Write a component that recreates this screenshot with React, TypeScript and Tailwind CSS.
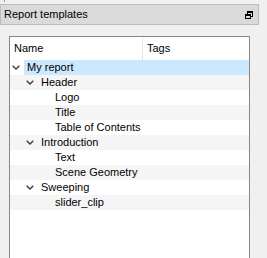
import React from "react";

type Node = {
  label: string;
  depth: 0 | 1 | 2;
  open?: boolean;
  selected?: boolean;
};

const rows: Node[] = [
  { label: "My report", depth: 0, open: true, selected: true },
  { label: "Header", depth: 1, open: true },
  { label: "Logo", depth: 2 },
  { label: "Title", depth: 2 },
  { label: "Table of Contents", depth: 2 },
  { label: "Introduction", depth: 1, open: true },
  { label: "Text", depth: 2 },
  { label: "Scene Geometry", depth: 2 },
  { label: "Sweeping", depth: 1, open: true },
  { label: "slider_clip", depth: 2 },
];

const indentClass = ["w-[14px]", "w-[28px]", "w-[42px]"];

const Chevron = () => (
  <svg width="8" height="5" viewBox="0 0 8 5" className="block">
    <path d="M0.7 0.7 L4 4 L7.3 0.7" fill="none" stroke="#3c3c3c" strokeWidth="1.4" />
  </svg>
);

const FloatIcon = () => (
  <svg width="8" height="8" viewBox="0 0 8 8" className="block">
    <rect x="2.5" y="0.5" width="5" height="5" fill="none" stroke="#000" />
    <rect x="2" y="0" width="6" height="2" fill="#000" />
    <rect x="0.5" y="3.5" width="5" height="4" fill="#dadada" stroke="#000" />
    <rect x="0" y="3" width="6" height="2" fill="#000" />
  </svg>
);

const TreeRow = ({ node, index }: { node: Node; index: number }) => {
  return (
    <div className={"flex h-[15px] " + (index % 2 === 1 ? "bg-[#f5f5f5]" : "bg-white")}>
      <div className={"flex shrink-0 justify-end " + indentClass[node.depth]}>
        <div className="flex w-[14px] items-center pl-[2px]">{node.open && <Chevron />}</div>
      </div>
      <div
        className={
          "flex flex-1 items-center pl-[3px] leading-none " + (node.selected ? "bg-[#cce8ff]" : "")
        }
      >
        {node.label}
      </div>
    </div>
  );
};

export default function App() {
  return (
    <div
      className="relative h-[258px] w-[267px] overflow-hidden bg-[#f0f0f0] pt-[4px] text-[11px] text-black"
      style={{ fontFamily: '"Liberation Sans", Arial, sans-serif' }}
    >
      <div className="absolute left-[4px] top-0 h-[2px] w-[1px] bg-[#9a9a9a]" />
      <div className="flex h-[21px] w-[259px] items-center justify-between border border-[#bdbdbd] bg-[#dadada] pl-[3px] pr-[5px]">
        <span className="leading-none">Report templates</span>
        <FloatIcon />
      </div>

      <div className="ml-[9px] mt-[11px] h-[260px] w-[241px] border border-[#828790] bg-white">
        <div className="flex h-[23px]">
          <div className="flex w-[133px] items-center border-r border-[#e5e5e5] pl-[4px]">Name</div>
          <div className="flex flex-1 items-center pl-[4px]">Tags</div>
        </div>
        {rows.map((r, i) => (
          <TreeRow key={r.label} node={r} index={i} />
        ))}
      </div>
    </div>
  );
}
